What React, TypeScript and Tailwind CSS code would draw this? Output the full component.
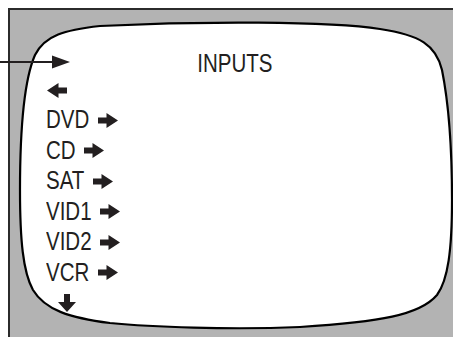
import React from "react";

const ARROW_COLOR = "#231f20";

function RightArrow({ className = "" }: { className?: string }) {
  return (
    <svg width="20" height="15" viewBox="0 0 20 15" className={className}>
      <path d="M0 4.6 H8.5 V0 L20 7.5 L8.5 15 V10.4 H0 Z" fill={ARROW_COLOR} />
    </svg>
  );
}

function LeftArrow({ className = "" }: { className?: string }) {
  return (
    <svg width="20" height="15" viewBox="0 0 20 15" className={className}>
      <path d="M20 4.6 H11.5 V0 L0 7.5 L11.5 15 V10.4 H20 Z" fill={ARROW_COLOR} />
    </svg>
  );
}

function DownArrow({ className = "" }: { className?: string }) {
  return (
    <svg width="18" height="18" viewBox="0 0 18 18" className={className}>
      <path d="M6 0 H12 V8 H18 L9 18 L0 8 H6 Z" fill={ARROW_COLOR} />
    </svg>
  );
}

const items = [
  { label: "DVD", w: "w-[52px]" },
  { label: "CD", w: "w-[38px]" },
  { label: "SAT", w: "w-[47px]" },
  { label: "VID1", w: "w-[54px]" },
  { label: "VID2", w: "w-[54px]" },
  { label: "VCR", w: "w-[52px]" },
];

export default function App() {
  return (
    <div
      className="relative w-[453px] h-[337px] overflow-hidden bg-white"
      style={{ fontFamily: "'Liberation Sans Narrow', 'Arial Narrow', 'Liberation Sans', Arial, sans-serif" }}
    >
      <div className="ml-[8px] mt-[8px] w-[470px] h-[340px] border-l-2 border-t-2 border-[#2b2b2b] bg-[#b3b3b3]">
        <div className="relative w-full h-full">
          <svg
            className="absolute left-[-10px] top-[-10px]"
            width="453"
            height="337"
            viewBox="0 0 453 337"
          >
            <path
              d="M100 26 C200 21, 330 21, 380 29 C420 35, 436 45, 442 70 C450 110, 452 160, 452 200 C452 250, 448 280, 437 295 C420 315, 380 322, 300 327 C230 330, 150 327, 110 323 C70 318, 45 310, 33 290 C23 272, 20 240, 20 190 C20 130, 24 80, 35 55 C45 35, 65 30, 100 26 Z"
              fill="#ffffff"
              stroke="#000000"
              strokeWidth="2.2"
            />
          </svg>
          <div className="relative flex flex-col pt-[38px] text-[25px] leading-[30.5px] text-[#231f20]">
            <div className="w-[450px] flex justify-center">
              <span className="inline-block scale-x-[0.82]">INPUTS</span>
            </div>
            <div className="pl-[37px]">
              <LeftArrow className="mt-[4px] mb-[6.5px] block" />
            </div>
            {items.map((it) => (
              <div key={it.label} className="pl-[36px] flex items-center">
                <span className={`${it.w} whitespace-nowrap overflow-visible`}>
                  <span className="inline-block origin-left scale-x-[0.82]">{it.label}</span>
                </span>
                <RightArrow className="mt-[2px] block" />
              </div>
            ))}
            <div className="pl-[48px]">
              <DownArrow className="mt-[6.5px] block" />
            </div>
          </div>
        </div>
      </div>
      <svg className="absolute left-0 top-0" width="80" height="80" viewBox="0 0 80 80">
        <rect x="0" y="61" width="56" height="2" fill="#231f20" />
        <path d="M52 55.5 L70 62 L52 68.5 Z" fill="#231f20" />
      </svg>
    </div>
  );
}
